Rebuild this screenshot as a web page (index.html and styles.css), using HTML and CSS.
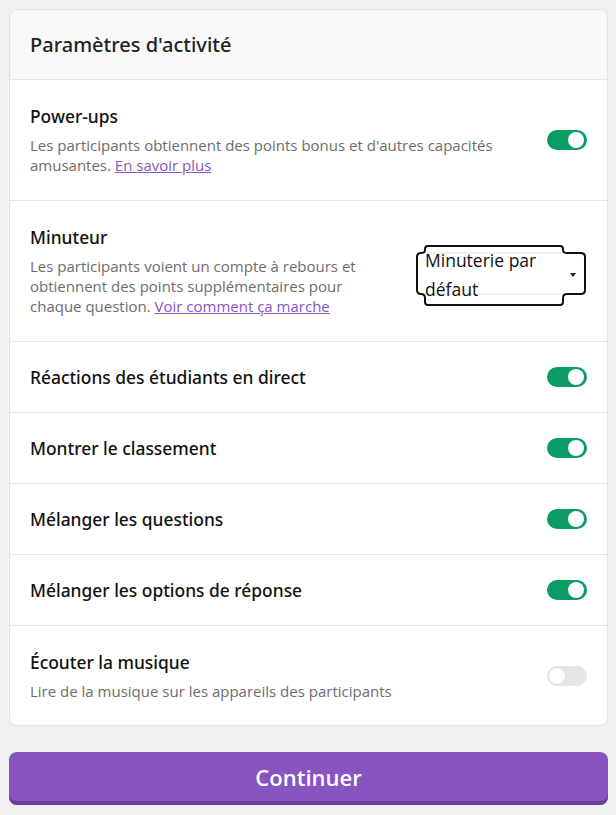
FILE: index.html
```html
<!DOCTYPE html>
<html lang="fr">
<head>
<meta charset="utf-8">
<link rel="stylesheet" href="styles.css">
</head>
<body>
<div class="page">
  <section class="card">
    <header class="card-head"><h1 class="card-title">Paramètres d'activité</h1></header>

    <div class="row row-tall">
      <div class="text">
        <div class="label">Power-ups</div>
        <p class="desc">Les participants obtiennent des points bonus et d'autres capacités amusantes. <a class="link" href="#">En savoir plus</a></p>
      </div>
      <span class="toggle on"><span class="knob"></span></span>
    </div>

    <div class="row row-tall">
      <div class="text text-narrow">
        <div class="label">Minuteur</div>
        <p class="desc">Les participants voient un compte à rebours et obtiennent des points supplémentaires pour chaque question. <a class="link" href="#">Voir comment ça marche</a></p>
      </div>
      <div class="select">
        <svg class="select-frame" width="172" height="62" viewBox="0 0 172 62">
          <path d="M10,8 H148 M10,49 H148" stroke="#e2e2e2" stroke-width="1" fill="none"/>
          <path d="M13,1 H145 Q148,1 148,4 V5 Q148,8 152,8 H166 Q170,8 170,12 V45 Q170,49 166,49 H152 Q148,49 148,53 V57 Q148,60 145,60 H13 Q10,60 10,57 V53 Q10,49 6,49 Q2,49 2,45 V12 Q2,8 6,8 Q10,8 10,5 V4 Q10,1 13,1 Z" stroke="#111" stroke-width="2" fill="none"/>
        </svg>
        <span class="select-text">Minuterie par défaut</span>
        <span class="caret"></span>
      </div>
    </div>

    <div class="row row-short"><div class="label">Réactions des étudiants en direct</div><span class="toggle on"><span class="knob"></span></span></div>
    <div class="row row-short"><div class="label">Montrer le classement</div><span class="toggle on"><span class="knob"></span></span></div>
    <div class="row row-short"><div class="label">Mélanger les questions</div><span class="toggle on"><span class="knob"></span></span></div>
    <div class="row row-short"><div class="label">Mélanger les options de réponse</div><span class="toggle on"><span class="knob"></span></span></div>

    <div class="row row-tall row-last">
      <div class="text">
        <div class="label">Écouter la musique</div>
        <p class="desc">Lire de la musique sur les appareils des participants</p>
      </div>
      <span class="toggle off"><span class="knob"></span></span>
    </div>
  </section>

  <button class="btn" type="button">Continuer</button>
</div>
</body>
</html>
```
FILE: styles.css
```css
* { box-sizing: border-box; }
html, body { margin: 0; padding: 0; }
body {
  background: #f1f1f1;
  font-family: "Open Sans", "Noto Sans", sans-serif;
  color: #1c1c1c;
}
.page {
  padding: 9px 8px 10px 9px;
  display: flex;
  flex-direction: column;
  gap: 26px;
}
.card {
  background: #fff;
  border: 1px solid #e3e3e3;
  border-radius: 8px;
  overflow: hidden;
}
.card-head {
  background: #f9f9f9;
  height: 70px;
  border-bottom: 1px solid #e6e6e6;
  display: flex;
  align-items: center;
  padding: 0 20px;
}
.card-title {
  margin: 0;
  font-family: "Noto Sans", "Open Sans", sans-serif;
  font-size: 20px;
  font-weight: 500;
  line-height: 24px;
  color: #222;
}
.row {
  display: flex;
  align-items: center;
  justify-content: space-between;
  gap: 24px;
  padding: 0 20px;
  border-bottom: 1px solid #e6e6e6;
}
.row-last { border-bottom: none; }
.row-tall { padding-top: 24px; padding-bottom: 25px; }
.row-short { height: 71px; }
.row-last { padding-bottom: 24px; }
.text { flex: 1; min-width: 0; }
.text-narrow { max-width: 355px; }
.label {
  font-family: "Noto Sans", "Open Sans", sans-serif;
  font-size: 17.4px;
  line-height: 24px;
  font-weight: 500;
  color: #111;
}
.desc {
  margin: 7px 0 0;
  font-size: 15px;
  line-height: 20px;
  color: #6d6d6d;
}
.link { color: #8854c0; text-decoration: underline; }

.toggle {
  flex: none;
  width: 40px;
  height: 20px;
  border-radius: 10px;
  position: relative;
}
.toggle.on { background: #0a9c64; }
.toggle.off { background: #e6e6e6; }
.knob {
  position: absolute;
  top: 2px;
  width: 16px;
  height: 16px;
  border-radius: 50%;
  background: #fff;
}
.toggle.on .knob { right: 3px; }
.toggle.off .knob { left: 1px; top: 1px; width: 18px; height: 18px; border: 1px solid #e0e0e0; }

.select {
  flex: none;
  position: relative;
  width: 172px;
  height: 62px;
  margin-top: 10px;
}
.select-frame { position: absolute; left: 0; top: 0; }
.select-text {
  position: absolute;
  left: 10px;
  top: 1px;
  width: 138px;
  font-size: 17.5px;
  line-height: 29px;
  color: #111;
}
.caret {
  position: absolute;
  left: 155px;
  top: 28px;
  width: 0;
  height: 0;
  border-left: 3px solid transparent;
  border-right: 3px solid transparent;
  border-top: 4px solid #222;
}

.btn {
  height: 53px;
  width: 100%;
  border: none;
  border-radius: 8px;
  background: #8854c0;
  box-shadow: inset 0 -4px 0 #6b3f9c;
  color: #fff;
  font-family: "Open Sans", "Noto Sans", sans-serif;
  font-size: 22px;
  font-weight: 600;
  padding: 0 0 4px;
}
```
